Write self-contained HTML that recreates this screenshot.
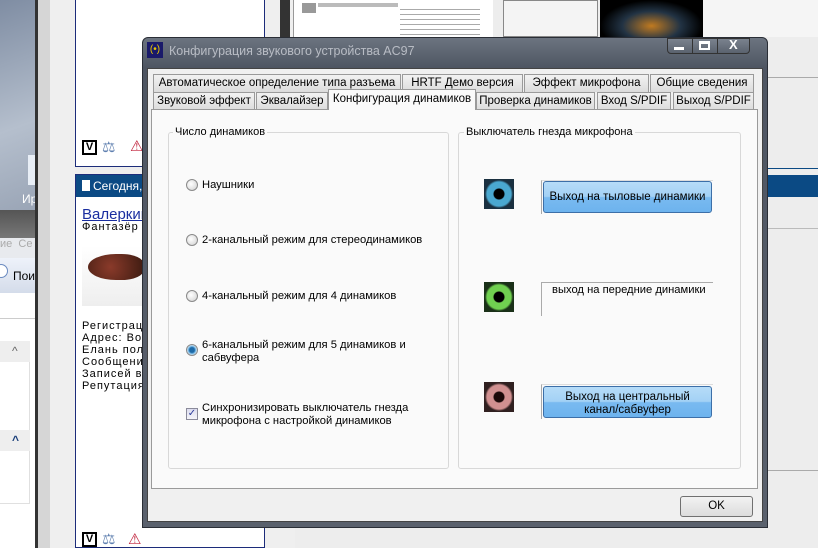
<!DOCTYPE html>
<html><head><meta charset="utf-8"><style>
*{margin:0;padding:0;box-sizing:border-box}
body{width:818px;height:548px;overflow:hidden;position:relative;background:#ededed;font-family:"Liberation Sans","DejaVu Sans",sans-serif;font-size:11px;color:#000}
.a{position:absolute}
.tab{position:absolute;height:18px;border:1px solid #9a9a9a;border-bottom:none;background:linear-gradient(#f2f2f2,#dcdcdc);font-size:11.5px;text-align:center;line-height:17px;white-space:nowrap}
.grp{position:absolute;border:1px solid #d8d8d8;border-radius:3px}
.lbl{position:absolute;background:#fafafa;padding:0 2px;font-size:11px}
.rad{position:absolute;width:12px;height:12px;border-radius:50%;border:1px solid #8a8a8a;background:radial-gradient(circle at 40% 40%,#fff,#cfcfcf)}
.rt{position:absolute;font-size:11.2px;line-height:13px}
.jack{position:absolute;width:30px;height:30px}
.btn{position:absolute;border:1px solid #3c6fa8;border-radius:3px;background:linear-gradient(#b6dcf8 0%,#a3d1f5 48%,#79baf0 52%,#6db3ee 100%);text-align:center;font-size:11.5px;line-height:13px}
</style></head><body>
<div class="a" style="left:0;top:0;width:35px;height:210px;background:linear-gradient(160deg,#7f8da3,#b5bfcd 60%,#9aa5b6)"></div>
<div class="a" style="left:28px;top:155px;width:8px;height:30px;background:#e8eef6"></div>
<div class="a" style="left:22px;top:192px;font-size:12px;color:#fff">Ир</div>
<div class="a" style="left:0;top:210px;width:35px;height:28px;background:linear-gradient(#555,#777)"></div>
<div class="a" style="left:0;top:238px;width:35px;height:20px;background:#e8eaee;color:#aaa;font-size:11px;padding-left:0">ие &nbsp;Се</div>
<div class="a" style="left:0;top:258px;width:35px;height:35px;background:linear-gradient(#eef2fa,#d4dcea)"></div>
<div class="a" style="left:-6px;top:264px;width:14px;height:14px;border-radius:50%;border:1px solid #6a8ac0;background:#fff"></div>
<div class="a" style="left:13px;top:269px;font-size:12px">Пои</div>
<div class="a" style="left:0;top:293px;width:35px;height:255px;background:#fff"></div>
<div class="a" style="left:0;top:318px;width:35px;height:1px;background:#ccc"></div>
<div class="a" style="left:0;top:341px;width:30px;height:163px;border:1px solid #e0e0e0;border-left:none"></div>
<div class="a" style="left:0;top:341px;width:30px;height:21px;background:#eee"></div>
<div class="a" style="left:12px;top:344px;color:#666;font-size:12px">^</div>
<div class="a" style="left:0;top:430px;width:30px;height:21px;background:#eee"></div>
<div class="a" style="left:12px;top:433px;color:#1a3f7a;font-size:12px;font-weight:bold">^</div>
<div class="a" style="left:35px;top:0;width:3px;height:548px;background:#333"></div>
<div class="a" style="left:38px;top:0;width:12px;height:548px;background:#d6d6d6"></div>
<div class="a" style="left:50px;top:0;width:25px;height:548px;background:#efefef"></div>
<div class="a" style="left:75px;top:0;width:190px;height:167px;background:#fff;border:1px solid #1c2c7a;border-top:none"></div>
<div class="a" style="left:75px;top:174px;width:190px;height:374px;background:#fff;border:1px solid #1c2c7a"></div>
<div class="a" style="left:76px;top:175px;width:742px;height:22px;background:#0b4a84"></div>
<div class="a" style="left:82px;top:180px;width:8px;height:11px;background:#fff"></div>
<div class="a" style="left:93px;top:179px;color:#fff;font-size:12px">Сегодня,</div>
<div class="a" style="left:82px;top:206px;color:#1a2ea0;font-size:15px;text-decoration:underline">Валеркин</div>
<div class="a" style="left:82px;top:221px;font-size:11px;letter-spacing:1px">Фантазёр</div>
<div class="a" style="left:82px;top:246px;width:60px;height:60px;background:linear-gradient(#fff,#eee)"></div>
<div class="a" style="left:88px;top:254px;width:56px;height:26px;border-radius:50% 40% 40% 50%;background:radial-gradient(circle at 40% 50%,#8a3a2a,#3a1a10)"></div>
<div class="a" style="left:82px;top:320px;font-size:11px;line-height:12px;letter-spacing:1px">Регистрац<br>Адрес: Вое<br>Елань пол<br>Сообщени<br>Записей в<br>Репутация</div>
<div class="a" style="left:82px;top:140px;width:15px;height:15px;border:2px solid #000;font-weight:bold;font-size:11px;line-height:11px;text-align:center">V</div>
<div class="a" style="left:102px;top:138px;color:#6080b0;font-size:15px">⚖</div>
<div class="a" style="left:130px;top:137px;color:#c0203a;font-size:15px">⚠</div>
<div class="a" style="left:82px;top:532px;width:15px;height:15px;border:2px solid #000;font-weight:bold;font-size:11px;line-height:11px;text-align:center">V</div>
<div class="a" style="left:102px;top:530px;color:#6080b0;font-size:15px">⚖</div>
<div class="a" style="left:128px;top:530px;color:#c0203a;font-size:15px">⚠</div>
<div class="a" style="left:265px;top:0;width:30px;height:548px;background:#efefef"></div>
<div class="a" style="left:280px;top:0;width:10px;height:37px;background:#333"></div>
<div class="a" style="left:293px;top:0;width:200px;height:37px;background:#fff;border-left:1px solid #999"></div>
<div class="a" style="left:302px;top:3px;width:14px;height:10px;background:#999"></div>
<div class="a" style="left:318px;top:3px;width:80px;height:4px;background:#bbb"></div>
<div class="a" style="left:400px;top:5px;width:80px;height:30px;background:repeating-linear-gradient(#fff 0 4px,#aaa 4px 5px)"></div>
<div class="a" style="left:503px;top:0;width:95px;height:37px;background:#f4f4f4;border:1px solid #888"></div>
<div class="a" style="left:600px;top:0;width:103px;height:37px;background:radial-gradient(ellipse at 50% 70%,#c07a20,#234 40%,#000 70%)"></div>
<div class="a" style="left:703px;top:0;width:115px;height:37px;background:#f5f5f5"></div>
<div class="a" style="left:767px;top:77px;width:51px;height:1px;background:#aaa"></div>
<div class="a" style="left:767px;top:168px;width:51px;height:1px;background:#0b4a84"></div>
<div class="a" style="left:767px;top:228px;width:51px;height:1px;background:#bbb"></div>
<div class="a" style="left:767px;top:470px;width:51px;height:1px;background:#aaa"></div>
<div class="a" style="left:142px;top:37px;width:626px;height:491px;border:1px solid #2a2e36;border-radius:6px 6px 0 0;background:linear-gradient(#6c7480,#4e5562 30px,#5a616d);"></div>
<div class="a" style="left:147px;top:42px;width:16px;height:16px;background:#1a1a6a;color:#e8c800;font-size:10px;text-align:center;line-height:16px">(•)</div>
<div class="a" style="left:169px;top:44px;color:#b8bcc4;font-size:12.5px">Конфигурация звукового устройства AC97</div>
<div class="a" style="left:667px;top:38px;width:83px;height:16px;border:1px solid #333;border-radius:0 0 4px 4px;background:linear-gradient(#7a828e,#5a626e)"></div>
<div class="a" style="left:692px;top:38px;width:1px;height:16px;background:#333"></div>
<div class="a" style="left:717px;top:38px;width:1px;height:16px;background:#333"></div>
<div class="a" style="left:674px;top:47px;width:10px;height:3px;background:#fff"></div>
<div class="a" style="left:699px;top:41px;width:11px;height:9px;border:2px solid #fff;border-top-width:3px"></div>
<div class="a" style="left:729px;top:37px;color:#fff;font-size:13px;font-weight:bold">X</div>
<div class="a" style="left:147px;top:68px;width:616px;height:454px;background:#f0f0f0;border:1px solid #444"></div>
<div class="tab" style="left:153px;top:74px;width:248px">Автоматическое определение типа разъема</div>
<div class="tab" style="left:402px;top:74px;width:121px">HRTF Демо версия</div>
<div class="tab" style="left:524px;top:74px;width:125px">Эффект микрофона</div>
<div class="tab" style="left:650px;top:74px;width:104px">Общие сведения</div>
<div class="tab" style="left:153px;top:92px;width:102px">Звуковой эффект</div>
<div class="tab" style="left:256px;top:92px;width:72px">Эквалайзер</div>
<div class="tab" style="left:476px;top:92px;width:119px">Проверка динамиков</div>
<div class="tab" style="left:597px;top:92px;width:74px">Вход S/PDIF</div>
<div class="tab" style="left:673px;top:92px;width:81px">Выход S/PDIF</div>
<div class="a" style="left:151px;top:109px;width:607px;height:380px;background:#fafafa;border:1px solid #9a9a9a"></div>
<div class="tab" style="left:328px;top:89px;width:148px;height:21px;background:#fafafa;border-color:#9a9a9a;line-height:19px">Конфигурация динамиков</div>
<div class="grp" style="left:168px;top:132px;width:281px;height:337px"></div>
<div class="lbl" style="left:173px;top:126px">Число динамиков</div>
<div class="rad" style="left:186px;top:179px"></div><div class="rt" style="left:202px;top:179px">Наушники</div>
<div class="rad" style="left:186px;top:234px"></div><div class="rt" style="left:202px;top:234px">2-канальный режим для стереодинамиков</div>
<div class="rad" style="left:186px;top:290px"></div><div class="rt" style="left:202px;top:290px">4-канальный режим для 4 динамиков</div>
<div class="rad" style="left:186px;top:344px;background:radial-gradient(circle,#1d6aa8 0 2.5px,#6ab0e0 3.5px,#d8e8f4 5px)"></div><div class="rt" style="left:202px;top:339px">6-канальный режим для 5 динамиков и<br>сабвуфера</div>
<div class="a" style="left:186px;top:408px;width:12px;height:12px;border:1px solid #8a8a9a;background:linear-gradient(#dde,#f4f4f8);color:#2a3a9a;font-size:10px;line-height:10px;text-align:center">✓</div>
<div class="rt" style="left:202px;top:402px">Синхронизировать выключатель гнезда<br>микрофона с настройкой динамиков</div>
<div class="grp" style="left:458px;top:132px;width:283px;height:337px"></div>
<div class="lbl" style="left:464px;top:126px">Выключатель гнезда микрофона</div>
<div class="jack" style="left:484px;top:179px;background:radial-gradient(circle,#000 0 5px,#4aa8d0 6px 12px,#1a3040 14px)"></div>
<div class="jack" style="left:484px;top:282px;background:radial-gradient(circle,#000 0 5px,#70d050 6px 12px,#1a3018 14px)"></div>
<div class="jack" style="left:484px;top:382px;background:radial-gradient(circle,#1a0808 0 5px,#d09090 6px 12px,#302020 14px)"></div>
<div class="a" style="left:541px;top:180px;width:172px;height:34px;border-left:1px solid #aaa;border-top:1px solid #ddd"></div>
<div class="btn" style="left:543px;top:181px;width:169px;height:32px;line-height:30px">Выход на тыловые динамики</div>
<div class="a" style="left:541px;top:282px;width:172px;height:34px;border-left:1px solid #aaa;border-top:1px solid #aaa"></div>
<div class="rt" style="left:552px;top:284px">выход на передние динамики</div>
<div class="a" style="left:541px;top:384px;width:172px;height:35px;border-left:1px solid #aaa;border-top:1px solid #ddd"></div>
<div class="btn" style="left:543px;top:386px;width:169px;height:32px;padding-top:4px">Выход на центральный<br>канал/сабвуфер</div>
<div class="a" style="left:680px;top:496px;width:73px;height:21px;border:1px solid #707070;border-radius:3px;background:linear-gradient(#f2f2f2,#dcdcdc);text-align:center;line-height:19px;font-size:11.5px">OK</div>
</body></html>
